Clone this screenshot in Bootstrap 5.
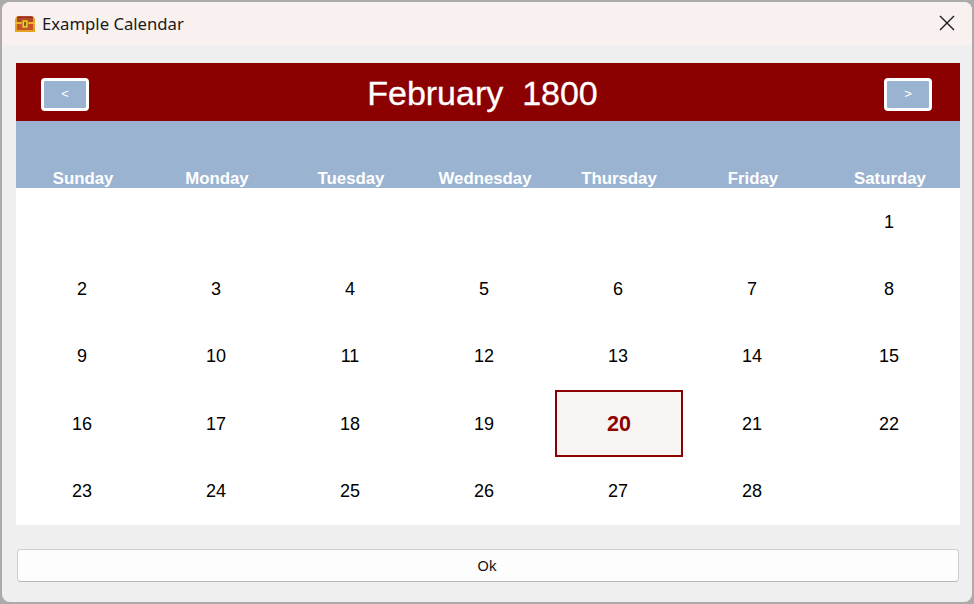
<!DOCTYPE html>
<html lang="en">
<head>
  <meta charset="UTF-8" />
  <meta name="viewport" content="width=device-width, initial-scale=1.0"/>
  <title>Example Calendar</title>
  <link href="https://cdn.jsdelivr.net/npm/bootstrap@5.3.3/dist/css/bootstrap.min.css" rel="stylesheet"/>
  <script src="https://cdn.jsdelivr.net/npm/bootstrap@5.3.3/dist/js/bootstrap.bundle.min.js"></script>
  <style>
    html, body { height: 100%; }
    body {
      background-color: #ababab;
      overflow: hidden;
      padding: 2px;
    }
    .app-window {
      height: 600px;
      background-color: #efefef;
      border-radius: 8px;
      overflow: hidden;
    }
    .title-bar {
      height: 43px;
      padding-left: 13px;
      background-color: #f9f1ef;
      font-family: "Noto Sans", sans-serif;
      font-size: 16.7px;
      color: #1a1a1a;
    }
    .title-text { margin-left: 7px; }
    .close-x { margin-right: 17px; margin-bottom: 2px; }
    .cal-wrap { padding: 18px 12px 0 14px; }
    .cal-head {
      height: 58px;
      padding: 4px 28px 0 25px;
      background-color: #8b0000;
      color: #fff;
      font-family: "Liberation Sans", sans-serif;
      font-size: 34px;
      white-space: pre;
      -webkit-text-stroke: 0.3px #fff;
    }
    .month-label { margin: 0 8px 2px 0; }
    .nav-arrow {
      width: 48px;
      height: 33px;
      padding: 0;
      background-color: #9ab3d1;
      border: 3px solid #fff;
      border-radius: 4px;
      color: #fff;
      font-family: "Liberation Sans", sans-serif;
      font-size: 13px;
      -webkit-text-stroke: 0;
    }
    .nav-arrow:hover { background-color: #9ab3d1; border-color: #fff; color: #fff; }
    .cal-grid {
      display: grid;
      grid-template-columns: repeat(6, 134px) 1fr;
      font-family: "Liberation Sans", sans-serif;
    }
    .week-row {
      height: 67px;
      background-color: #9ab3d1;
      color: #fff;
      font-size: 16.8px;
      font-weight: 700;
      line-height: 18px;
    }
    .day-rows {
      padding-top: 1px;
      background-color: #fff;
      grid-auto-rows: 67.2px;
      font-size: 18px;
      color: #000;
    }
    .day-cell { padding-right: 2px; }
    .day-today {
      margin: -1px 3px 1px 3px;
      padding: 1px 0 0;
      background-color: #f8f4f4;
      border: 2px solid #8b0000;
      color: #8b0000;
      font-size: 21.5px;
      font-weight: 700;
    }
    .foot-bar { padding: 24px 13px 0 15px; }
    .ok-btn {
      height: 33px;
      padding: 0 2px 0 0;
      background-color: #fdfdfd;
      border: 1px solid #cfcfcf;
      border-bottom-color: #b8b8b8;
      border-radius: 4px;
      color: #111;
      font-family: "Noto Sans", sans-serif;
      font-size: 15px;
    }
  </style>
</head>
<body>
  <div class="app-window d-flex flex-column">
    <!-- title bar -->
    <div class="title-bar d-flex align-items-center flex-shrink-0">
      <svg class="chest" width="20" height="18" viewBox="0 0 20 18" aria-hidden="true">
        <path d="M2 1h16l2 3v13H0V4z" fill="#e2a51f"/>
        <path d="M3 1h14l1 2v4H2V3z" fill="#b5432a"/>
        <rect x="2" y="2" width="16" height="1" fill="#8f3320"/>
        <rect x="2" y="9" width="16" height="6" fill="#c9502a"/>
        <rect x="0" y="7" width="20" height="2" fill="#edb62c"/>
        <rect x="7" y="5" width="6" height="8" fill="#f2c33a" stroke="#a8760f" stroke-width="0.8"/>
        <rect x="9" y="7" width="2" height="4" fill="#8a5a10"/>
      </svg>
      <span class="title-text flex-grow-1">Example Calendar</span>
      <svg class="close-x" width="16" height="16" viewBox="0 0 16 16" aria-hidden="true">
        <path d="M1 1l14 14M15 1L1 15" stroke="#1a1a1a" stroke-width="1.4" fill="none"/>
      </svg>
    </div>

    <div class="cal-wrap">
      <!-- month header -->
      <div class="cal-head d-flex align-items-center justify-content-between">
        <button type="button" class="btn nav-arrow">&lt;</button>
        <span class="month-label">February  1800</span>
        <button type="button" class="btn nav-arrow">&gt;</button>
      </div>

      <!-- weekdays -->
      <div class="cal-grid week-row">
        <div class="d-flex align-items-end justify-content-center">Sunday</div>
        <div class="d-flex align-items-end justify-content-center">Monday</div>
        <div class="d-flex align-items-end justify-content-center">Tuesday</div>
        <div class="d-flex align-items-end justify-content-center">Wednesday</div>
        <div class="d-flex align-items-end justify-content-center">Thursday</div>
        <div class="d-flex align-items-end justify-content-center">Friday</div>
        <div class="d-flex align-items-end justify-content-center">Saturday</div>
      </div>

      <!-- days -->
      <div class="cal-grid day-rows" id="days"></div>
    </div>

    <div class="foot-bar">
      <button type="button" class="btn ok-btn w-100">Ok</button>
    </div>
  </div>

  <script>
    const days = document.getElementById('days');
    for (let i = 0; i < 35; i++) {
      const num = i - 5;
      const cell = document.createElement('div');
      cell.className = 'day-cell d-flex align-items-center justify-content-center';
      if (num >= 1 && num <= 28) cell.textContent = num;
      if (num === 20) cell.classList.add('day-today');
      days.appendChild(cell);
    }
  </script>
</body>
</html>
